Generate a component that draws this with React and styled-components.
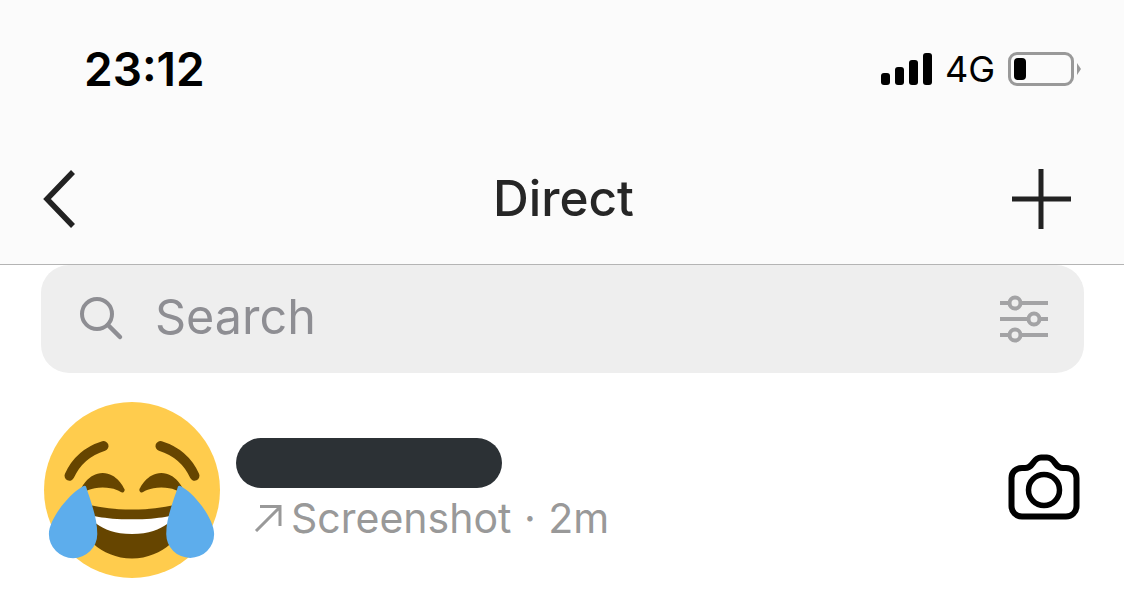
import React from 'react';
import styled, { createGlobalStyle } from 'styled-components';

const GlobalStyle = createGlobalStyle`
  html, body {
    margin: 0;
    background: #fff;
    font-family: Inter, "Liberation Sans", sans-serif;
  }
`;

function App() {
  return (
    <Page>
      <GlobalStyle />
      <Header>
        <StatusBar>
          <Time>23:12</Time>
          <StatusRight>
            <Signal>
              <SignalBar $h={12} />
              <SignalBar $h={18} />
              <SignalBar $h={25} />
              <SignalBar $h={32} />
            </Signal>
            <Network>4G</Network>
            <Battery>
              <BatteryLevel />
            </Battery>
            <BatteryTip />
          </StatusRight>
        </StatusBar>
        <NavBar>
          <NavSlot>
            <svg width="34" height="60" viewBox="0 0 34 60">
              <path d="M30 3 L4 30 L30 57" fill="none" stroke="#222" strokeWidth="5.5" />
            </svg>
          </NavSlot>
          <Title>Direct</Title>
          <NavSlot $right>
            <svg width="60" height="60" viewBox="0 0 60 60">
              <path d="M30 0 V60 M1 30 H60" fill="none" stroke="#222" strokeWidth="5" />
            </svg>
          </NavSlot>
        </NavBar>
      </Header>

      <SearchBar>
        <svg width="46" height="46" viewBox="0 0 46 46">
          <circle cx="19" cy="18" r="15" fill="none" stroke="#8e8e93" strokeWidth="4" />
          <path d="M30 29 L42 41" fill="none" stroke="#8e8e93" strokeWidth="4.5" strokeLinecap="round" />
        </svg>
        <SearchText>Search</SearchText>
        <FilterIcon>
          <svg width="50" height="48" viewBox="0 0 50 48">
            <g fill="none" stroke="#a3a3a5" strokeWidth="4">
              <path d="M1 8 H49 M1 24 H49 M1 40 H49" />
              <circle cx="16" cy="8" r="5.5" fill="#eee" />
              <circle cx="35" cy="24" r="5.5" fill="#eee" />
              <circle cx="16" cy="40" r="5.5" fill="#eee" />
            </g>
          </svg>
        </FilterIcon>
      </SearchBar>

      <ThreadRow>
        <Avatar>
          <svg width="176" height="176" viewBox="0 0 36 36">
            <circle cx="18" cy="18" r="18" fill="#FFCC4D" />
            <path
              fill="#664500"
              d="M16.457 17.797c-.06-.135-1.499-3.297-4.457-3.297-2.957 0-4.397 3.162-4.457 3.297-.092.207-.032.449.144.591.176.142.427.147.61.014.013-.009 1.262-.902 3.703-.902 2.426 0 3.674.881 3.702.901.088.066.194.099.298.099.11 0 .221-.037.312-.109.178-.142.237-.386.145-.594zM28.457 17.797c-.06-.135-1.499-3.297-4.457-3.297-2.957 0-4.397 3.162-4.457 3.297-.092.207-.032.449.145.591.175.142.426.147.61.014.012-.009 1.262-.902 3.702-.902 2.426 0 3.674.881 3.702.901.088.066.194.099.298.099.11 0 .221-.037.312-.109.177-.142.238-.386.145-.594zM18 22c-3.623 0-6.027-.422-9-1-.679-.131-2 0-2 2 0 4 4.595 9 11 9 6.404 0 11-5 11-9 0-2-1.321-2.132-2-2-2.973.578-5.377 1-9 1z"
            />
            <path fill="#FFF" d="M9 23s3 1 9 1 9-1 9-1-2 4-9 4-9-4-9-4z" />
            <path
              fill="none"
              stroke="#664500"
              strokeWidth="2"
              strokeLinecap="round"
              d="M5.2 15.1 C6.5 12.2 9 10 12.2 9 M30.8 15.1 C29.5 12.2 27 10 23.8 9"
            />
            <path fill="#5DADEC" d="M8.6 17.3 C9.4 20 10.9 23.5 10.9 27 A4.9 4.9 0 0 1 1 27 C1 24 5 19 7.6 17.5 C8 17.2 8.4 17 8.6 17.3z" />
            <path fill="#5DADEC" d="M27.4 17.3 C26.6 20 25 23.5 25 27 A4.9 4.9 0 0 0 34.8 27 C34.8 24 31 19 28.4 17.5 C28 17.2 27.6 17 27.4 17.3z" />
          </svg>
        </Avatar>
        <ThreadInfo>
          <RedactedName />
          <Meta>
            <svg width="28" height="28" viewBox="0 0 28 28">
              <path d="M2 27 L26 3 M6 2.5 H26 V22" fill="none" stroke="#999" strokeWidth="3" />
            </svg>
            <MetaText>Screenshot · 2m</MetaText>
          </Meta>
        </ThreadInfo>
        <CameraButton>
          <svg width="72" height="66" viewBox="0 0 72 66">
            <path
              d="M14 14 H17 C21 14 23 12 25 9 C27 6 29 3.500 33 3.500 H39 C43 3.500 45 6 47 9 C49 12 51 14 55 14 H58 C64 14 68.500 18 68.500 24 V52 C68.500 58 64 62.500 58 62.500 H14 C8 62.500 3.500 58 3.500 52 V24 C3.500 18 8 14 14 14 Z"
              fill="none"
              stroke="#000"
              strokeWidth="6"
            />
            <circle cx="36" cy="36" r="15.500" fill="none" stroke="#000" strokeWidth="5.5" />
          </svg>
        </CameraButton>
      </ThreadRow>
    </Page>
  );
}

const Page = styled.div`
  width: 1124px;
  height: 615px;
  overflow: hidden;
  background: #fff;
`;

const Header = styled.header`
  height: 265px;
  box-sizing: border-box;
  background: #fbfbfb;
  border-bottom: 1px solid #b4b4b4;
  display: flex;
  flex-direction: column;
`;

const StatusBar = styled.div`
  height: 140px;
  box-sizing: border-box;
  padding: 0 43px 2px 84px;
  display: flex;
  align-items: center;
  justify-content: space-between;
`;

const Time = styled.div`
  font-size: 46px;
  font-weight: 600;
  color: #000;
`;

const StatusRight = styled.div`
  display: flex;
  align-items: center;
`;

const Signal = styled.div`
  display: flex;
  align-items: flex-end;
  gap: 5px;
  height: 32px;
  margin-right: 13px;
`;

const SignalBar = styled.div`
  width: 9px;
  height: ${(p) => p.$h}px;
  background: #000;
  border-radius: 3px;
`;

const Network = styled.div`
  font-size: 36px;
  font-weight: 400;
  color: #000;
  margin-right: 13px;
`;

const Battery = styled.div`
  width: 66px;
  height: 34px;
  box-sizing: border-box;
  border: 3px solid #999;
  border-radius: 9px;
  padding: 3px;
`;

const BatteryLevel = styled.div`
  width: 12px;
  height: 100%;
  background: #000;
  border-radius: 4px;
`;

const BatteryTip = styled.div`
  width: 0;
  height: 0;
  margin-left: 3px;
  border-left: 4px solid #999;
  border-top: 6px solid transparent;
  border-bottom: 6px solid transparent;
`;

const NavBar = styled.div`
  flex: 1;
  box-sizing: border-box;
  padding: 0 53px 7px 43px;
  display: grid;
  grid-template-columns: 1fr auto 1fr;
  align-items: center;
`;

const NavSlot = styled.div`
  display: flex;
  justify-content: ${(p) => (p.$right ? 'flex-end' : 'flex-start')};
  svg {
    display: block;
  }
`;

const Title = styled.div`
  font-size: 49.5px;
  font-weight: 500;
  color: #262626;
  margin-left: 13px;
  padding-bottom: 1px;
`;

const SearchBar = styled.div`
  margin: 0 40px 0 41px;
  height: 108px;
  box-sizing: border-box;
  background: #eee;
  border-radius: 28px;
  padding: 0 35px 0 37px;
  display: flex;
  align-items: center;
`;

const SearchText = styled.div`
  font-size: 48.5px;
  color: #8e8e93;
  margin-left: 31px;
  padding-bottom: 6px;
`;

const FilterIcon = styled.div`
  margin-left: auto;
  height: 48px;
`;

const ThreadRow = styled.div`
  margin-top: 29px;
  padding: 0 44px;
  display: flex;
  align-items: center;
`;

const Avatar = styled.div`
  width: 176px;
  height: 176px;
  flex: none;
  svg {
    display: block;
  }
`;

const ThreadInfo = styled.div`
  margin-left: 16px;
  display: flex;
  flex-direction: column;
`;

const RedactedName = styled.div`
  width: 266px;
  height: 50px;
  background: #2c3135;
  border-radius: 25px;
`;

const Meta = styled.div`
  margin: 5px 0 0 18px;
  display: flex;
  align-items: center;
  gap: 9px;
`;

const MetaText = styled.div`
  font-size: 41px;
  color: #999;
  word-spacing: 1px;
`;

const CameraButton = styled.div`
  margin-left: auto;
  margin-bottom: 7px;
  svg {
    display: block;
  }
`;

export default App;
